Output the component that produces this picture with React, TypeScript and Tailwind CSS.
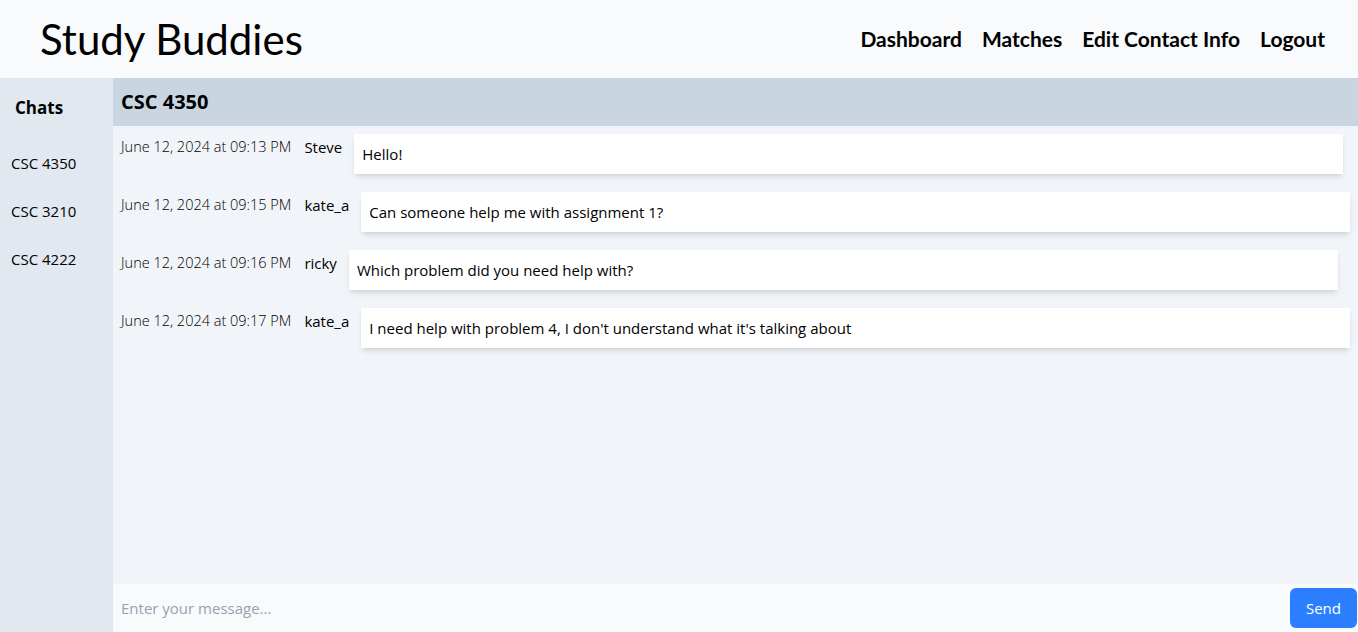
import React from 'react';

const chats = ['CSC 4350', 'CSC 3210', 'CSC 4222'];

const messages = [
  { time: 'June 12, 2024 at 09:13 PM', user: 'Steve', text: 'Hello!' },
  { time: 'June 12, 2024 at 09:15 PM', user: 'kate_a', text: 'Can someone help me with assignment 1?' },
  { time: 'June 12, 2024 at 09:16 PM', user: 'ricky', text: 'Which problem did you need help with?' },
  { time: 'June 12, 2024 at 09:17 PM', user: 'kate_a', text: "I need help with problem 4, I don't understand what it's talking about" },
];

export default function App() {
  return (
    <div className="h-screen flex flex-col overflow-hidden font-['Open_Sans',sans-serif] text-black">
      <header className="h-[78px] shrink-0 bg-slate-50 flex items-center justify-between pl-10 pr-[33px] font-['Lato',sans-serif]">
        <h1 className="text-[42px] leading-none">Study Buddies</h1>
        <nav className="flex gap-5 text-[21px] font-bold">
          <a>Dashboard</a>
          <a>Matches</a>
          <a>Edit Contact Info</a>
          <a>Logout</a>
        </nav>
      </header>

      <div className="flex flex-1 min-h-0">
        <aside className="w-[113px] shrink-0 bg-slate-200">
          <h2 className="pl-[15px] pt-[19px] text-[17px] font-bold leading-[22px]">Chats</h2>
          <ul className="mt-5">
            {chats.map((c) => (
              <li key={c} className="pl-[11px] h-12 flex items-center text-[15px]">
                {c}
              </li>
            ))}
          </ul>
        </aside>

        <main className="flex-1 min-w-0 flex flex-col bg-slate-100">
          <div className="h-12 shrink-0 bg-slate-300 flex items-center px-2">
            <h2 className="text-[20px] font-bold">CSC 4350</h2>
          </div>

          <div className="flex-1 min-h-0 overflow-hidden px-2 pt-2 flex flex-col gap-[18px]">
            {messages.map((m, i) => (
              <div key={i} className="flex items-start">
                <div className="h-[26px] flex items-center gap-[13px] shrink-0 whitespace-nowrap">
                  <span className="text-[14.5px] font-light text-black">{m.time}</span>
                  <span className="text-[15px]">{m.user}</span>
                </div>
                <div className="ml-3 w-[989px] shrink-0 bg-white shadow-md px-2 py-2 text-[15px] leading-6">
                  {m.text}
                </div>
              </div>
            ))}
          </div>

          <div className="h-12 shrink-0 bg-slate-50 flex items-center pl-2 pr-[1px]">
            <input
              className="flex-1 bg-transparent outline-none text-[15px] placeholder:text-gray-400"
              placeholder="Enter your message..."
            />
            <button className="h-10 px-4 rounded-md bg-blue-500 text-white text-[15px]">Send</button>
          </div>
        </main>
      </div>
    </div>
  );
}
